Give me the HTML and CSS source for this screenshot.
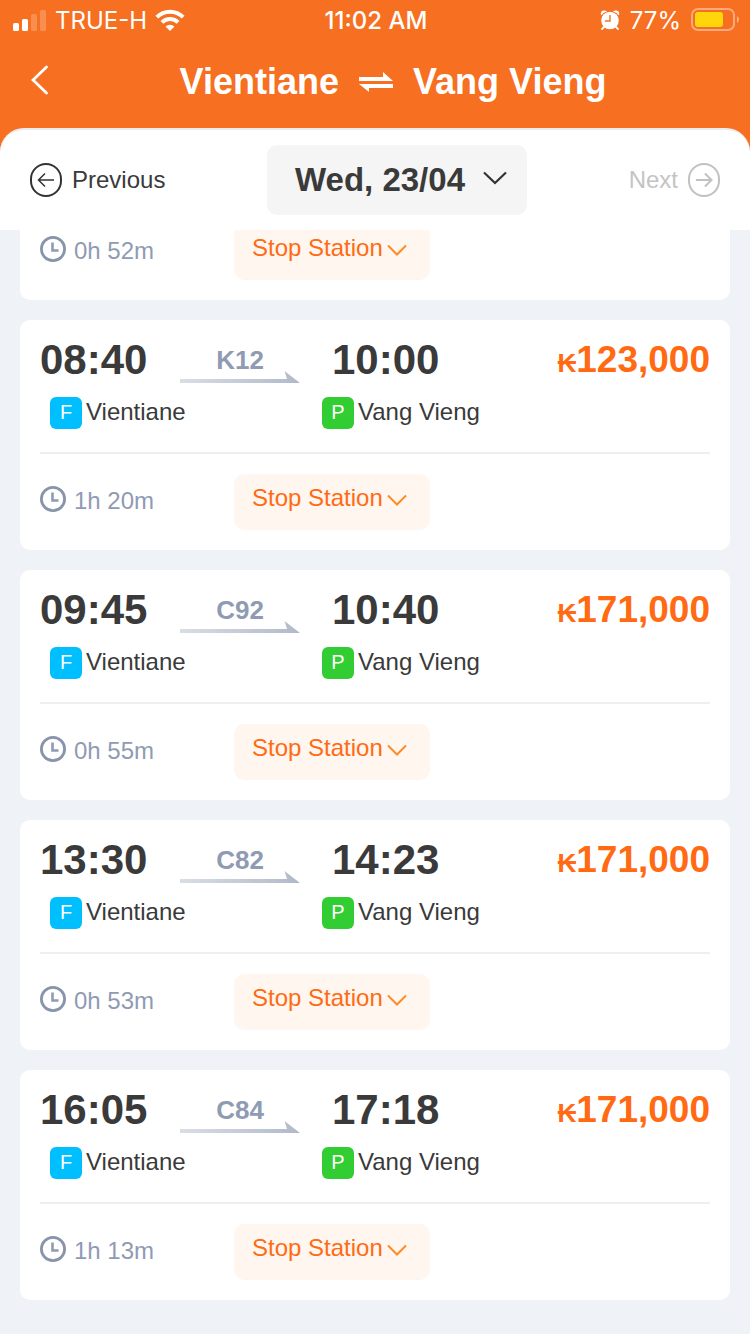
FILE: index.html
```html
<!DOCTYPE html>
<html lang="en">
<head>
<meta charset="utf-8">
<meta name="viewport" content="width=device-width, initial-scale=1">
<title>Vientiane – Vang Vieng</title>
<link rel="stylesheet" href="styles.css">
</head>
<body>
<svg class="defs" aria-hidden="true">
  <defs>
    <linearGradient id="fade" x1="0" x2="1" y1="0" y2="0">
      <stop offset="0" stop-color="#d9dde6"/>
      <stop offset="1" stop-color="#b1b9c9"/>
    </linearGradient>
    <symbol id="arrow" viewBox="0 0 120 12"><path fill="url(#fade)" d="M0 8H107L104.500 0L120 12H0Z"/></symbol>
    <symbol id="clock" viewBox="0 0 26 26"><circle cx="13" cy="13" r="11.6" fill="none" stroke="#8794aa" stroke-width="2.8"/><path d="M12.500 6.500V14.500H18.500" fill="none" stroke="#8e9bb1" stroke-width="2.600"/></symbol>
    <symbol id="chevron" viewBox="0 0 20 12"><path d="M1 1.500L10 10.500L19 1.500" fill="none" stroke="#ff8a26" stroke-width="2"/></symbol>
  </defs>
</svg>
<div class="app">
  <header class="header">
    <div class="status">
      <div class="status-side">
        <svg width="34" height="22" viewBox="0 0 34 22" fill="#fff"><rect x="0" y="14" width="6" height="8" rx="1.5"/><rect x="9" y="10" width="6" height="12" rx="1.5"/><g opacity=".22"><rect x="18" y="5" width="6" height="17" rx="1.5"/><rect x="27" y="1" width="6" height="21" rx="1.5"/></g></svg>
        <span>TRUE-H</span>
        <svg width="30" height="22" viewBox="0 0 30 22" fill="none" stroke="#fff" stroke-width="4"><path d="M1.800 8.200A18.700 18.700 0 0 1 28.200 8.200"/><path d="M6.900 13.300A11.500 11.500 0 0 1 23.100 13.300"/><path d="M15 22L10.600 17.500A6.200 6.200 0 0 1 19.400 17.500Z" fill="#fff" stroke="none"/></svg>
      </div>
      <span class="clock-time">11:02 AM</span>
      <div class="status-side status-end">
        <svg width="20" height="20" viewBox="0 0 20 20"><g fill="#fff"><path d="M1 5.500Q0 1 3.500 .5Q6 .2 7 1.500Q3 2.500 1 5.500Z"/><path d="M19 5.500Q20 1 16.500 .5Q14 .2 13 1.500Q17 2.500 19 5.500Z"/><circle cx="10" cy="10.500" r="8.800"/></g><path d="M2 19L4.500 16.500M18 19L15.500 16.500" stroke="#fff" stroke-width="1.800" stroke-linecap="round"/><path d="M10 5V11H5" fill="none" stroke="#f76f20" stroke-width="1.400"/></svg>
        <span>77%</span>
        <svg width="48" height="24" viewBox="0 0 48 24"><rect x="1" y="1" width="42" height="21" rx="6" fill="none" stroke="#fff" stroke-opacity=".42" stroke-width="2"/><rect x="4" y="4" width="28" height="15" rx="3" fill="#ffd60a"/><path d="M46 8Q50 11.500 46 15Z" fill="#fff" fill-opacity=".5"/></svg>
      </div>
    </div>
    <div class="titlebar">
      <button class="back" type="button" aria-label="Back"><svg width="18" height="30" viewBox="0 0 18 30"><path d="M15.500 2L2 15L15.500 28" fill="none" stroke="#fff" stroke-width="2.800" stroke-linecap="round"/></svg></button>
      <h1 class="route">
        <span>Vientiane</span>
        <svg width="34" height="20" viewBox="0 0 34 20" fill="#fff"><path d="M0 5H24V0L34 9H0Z"/><path d="M0 12H34V16H10V20Z"/></svg>
        <span>Vang Vieng</span>
      </h1>
    </div>
  </header>
  <nav class="days">
    <button class="day" type="button"><svg width="32" height="34" viewBox="0 0 32 34" fill="none" stroke="#333" stroke-width="2"><rect x="1" y="1" width="30" height="32" rx="15"/><path d="M24 17H8.500M15 10.500L8.500 17L15 23.500" stroke-width="1.500"/></svg>Previous</button>
    <button class="date" type="button">Wed, 23/04<svg width="24" height="14" viewBox="0 0 24 14"><path d="M1 1.500L12 12L23 1.500" fill="none" stroke="#333" stroke-width="2.200"/></svg></button>
    <button class="day day-next" type="button" disabled>Next<svg width="32" height="34" viewBox="0 0 32 34" fill="none" stroke="#c1c1c1" stroke-width="2"><rect x="1" y="1" width="30" height="32" rx="15"/><path d="M8 17H23.500M17 10.500L23.500 17L17 23.500"/></svg></button>
  </nav>
  <main class="trips">
    <article class="trip trip-cut">
      <div class="trip-foot">
        <span class="duration"><svg><use href="#clock"/></svg>0h 52m</span>
        <button class="stops" type="button">Stop Station<svg><use href="#chevron"/></svg></button>
      </div>
    </article>
    <article class="trip">
      <div class="times"><time>08:40</time><div class="train"><span>K12</span><svg><use href="#arrow"/></svg></div><time class="arrive">10:00</time><strong class="price"><small>₭</small>123,000</strong></div>
      <div class="places"><span class="place"><b class="badge from">F</b>Vientiane</span><span class="place"><b class="badge pass">P</b>Vang Vieng</span></div>
      <div class="trip-foot">
        <span class="duration"><svg><use href="#clock"/></svg>1h 20m</span>
        <button class="stops" type="button">Stop Station<svg><use href="#chevron"/></svg></button>
      </div>
    </article>
    <article class="trip">
      <div class="times"><time>09:45</time><div class="train"><span>C92</span><svg><use href="#arrow"/></svg></div><time class="arrive">10:40</time><strong class="price"><small>₭</small>171,000</strong></div>
      <div class="places"><span class="place"><b class="badge from">F</b>Vientiane</span><span class="place"><b class="badge pass">P</b>Vang Vieng</span></div>
      <div class="trip-foot">
        <span class="duration"><svg><use href="#clock"/></svg>0h 55m</span>
        <button class="stops" type="button">Stop Station<svg><use href="#chevron"/></svg></button>
      </div>
    </article>
    <article class="trip">
      <div class="times"><time>13:30</time><div class="train"><span>C82</span><svg><use href="#arrow"/></svg></div><time class="arrive">14:23</time><strong class="price"><small>₭</small>171,000</strong></div>
      <div class="places"><span class="place"><b class="badge from">F</b>Vientiane</span><span class="place"><b class="badge pass">P</b>Vang Vieng</span></div>
      <div class="trip-foot">
        <span class="duration"><svg><use href="#clock"/></svg>0h 53m</span>
        <button class="stops" type="button">Stop Station<svg><use href="#chevron"/></svg></button>
      </div>
    </article>
    <article class="trip">
      <div class="times"><time>16:05</time><div class="train"><span>C84</span><svg><use href="#arrow"/></svg></div><time class="arrive">17:18</time><strong class="price"><small>₭</small>171,000</strong></div>
      <div class="places"><span class="place"><b class="badge from">F</b>Vientiane</span><span class="place"><b class="badge pass">P</b>Vang Vieng</span></div>
      <div class="trip-foot">
        <span class="duration"><svg><use href="#clock"/></svg>1h 13m</span>
        <button class="stops" type="button">Stop Station<svg><use href="#chevron"/></svg></button>
      </div>
    </article>
  </main>
</div>
</body>
</html>
```

FILE: styles.css
```css
* { box-sizing: border-box; }
body {
  margin: 0;
  background: #eff3f8;
  color: #3a3a3a;
  font: 24px/32px "Liberation Sans", Arial, sans-serif;
}
button {
  border: 0;
  padding: 0;
  background: none;
  color: inherit;
  font: inherit;
}
svg { display: block; flex: none; }
.defs { position: absolute; width: 0; height: 0; }
.app { background: linear-gradient(#f76f20 0 160px, #eff3f8 160px); }

.header { color: #fff; }
.status {
  display: grid;
  grid-template-columns: 1fr auto 1fr;
  align-items: center;
  height: 40px;
  padding: 0 11px 0 13px;
  font-family: Inter, sans-serif;
}
.status-side { display: flex; align-items: center; gap: 8px; }
.status-end { justify-content: flex-end; gap: 10px; }
.status span { padding-top: 2px; }
.clock-time { font-weight: 500; }
.titlebar {
  display: grid;
  grid-template-columns: 36px 1fr;
  align-items: center;
  height: 88px;
  padding: 0 30px 8px;
}
.back { height: 48px; }
.back svg { margin: 0 auto 0 1px; }
.route {
  display: flex;
  justify-content: center;
  align-items: center;
  gap: 20px;
  margin: 0;
  padding-top: 3px;
  font-size: 36px;
  line-height: 40px;
}

.days {
  display: flex;
  justify-content: space-between;
  align-items: center;
  height: 102px;
  padding: 0 30px;
  border-top: 2px solid #ececee;
  border-radius: 24px 24px 0 0;
  background: #fff;
}
.day { display: flex; align-items: center; gap: 10px; }
.day-next { color: #c4c4c4; }
.date {
  display: flex;
  justify-content: center;
  align-items: center;
  gap: 18px;
  width: 260px;
  height: 70px;
  padding-left: 8px;
  border-radius: 10px;
  background: #f5f5f5;
  font-size: 33px;
  font-weight: 700;
}
.date svg { margin-bottom: 4px; }

.trips {
  display: grid;
  gap: 20px;
  padding: 0 20px 34px;
  background: #eff3f8;
}
.trip {
  padding: 20px;
  border-radius: 10px;
  background: #fff;
}
.trip-cut {
  height: 70px;
  overflow: hidden;
  padding-top: 0;
  border-radius: 0 0 10px 10px;
  display: flex;
  flex-direction: column;
  justify-content: flex-end;
}
.trip-cut .trip-foot { border: 0; padding: 0; }
.times {
  display: grid;
  grid-template-columns: 140px 120px 1fr auto;
  height: 44px;
  font-size: 42px;
  font-weight: 700;
  line-height: 40px;
}
.train {
  display: grid;
  grid-template-rows: 31px 12px;
  justify-items: center;
  color: #8f9bb3;
  font-size: 26px;
}
.train svg { width: 120px; height: 12px; }
.arrive { padding-left: 32px; }
.price { color: #ff6a13; font-size: 37px; }
.price small { font-size: 26px; }
.places {
  display: grid;
  grid-template-columns: 272px 1fr;
  padding: 13px 0 23px 10px;
}
.place { display: flex; gap: 4px; line-height: 30px; }
.badge {
  width: 32px;
  height: 32px;
  border-radius: 6px;
  color: #fff;
  font-size: 20px;
  font-weight: 400;
  text-align: center;
}
.from { background: #00bfff; }
.pass { background: #32cd32; }
.trip-foot {
  display: grid;
  grid-template-columns: 194px 196px;
  border-top: 2px solid #eeefef;
  padding-top: 20px;
}
.duration {
  display: flex;
  align-items: center;
  gap: 8px;
  padding-bottom: 2px;
  color: #8f9bb3;
}
.duration svg { width: 26px; height: 26px; margin-bottom: 4px; }
.stops {
  display: flex;
  align-items: center;
  gap: 4px;
  height: 56px;
  padding: 0 0 8px 18px;
  border-radius: 10px;
  background: #fff6ef;
  color: #ff6a13;
}
.stops svg { width: 20px; height: 12px; margin-top: 3px; }
```
